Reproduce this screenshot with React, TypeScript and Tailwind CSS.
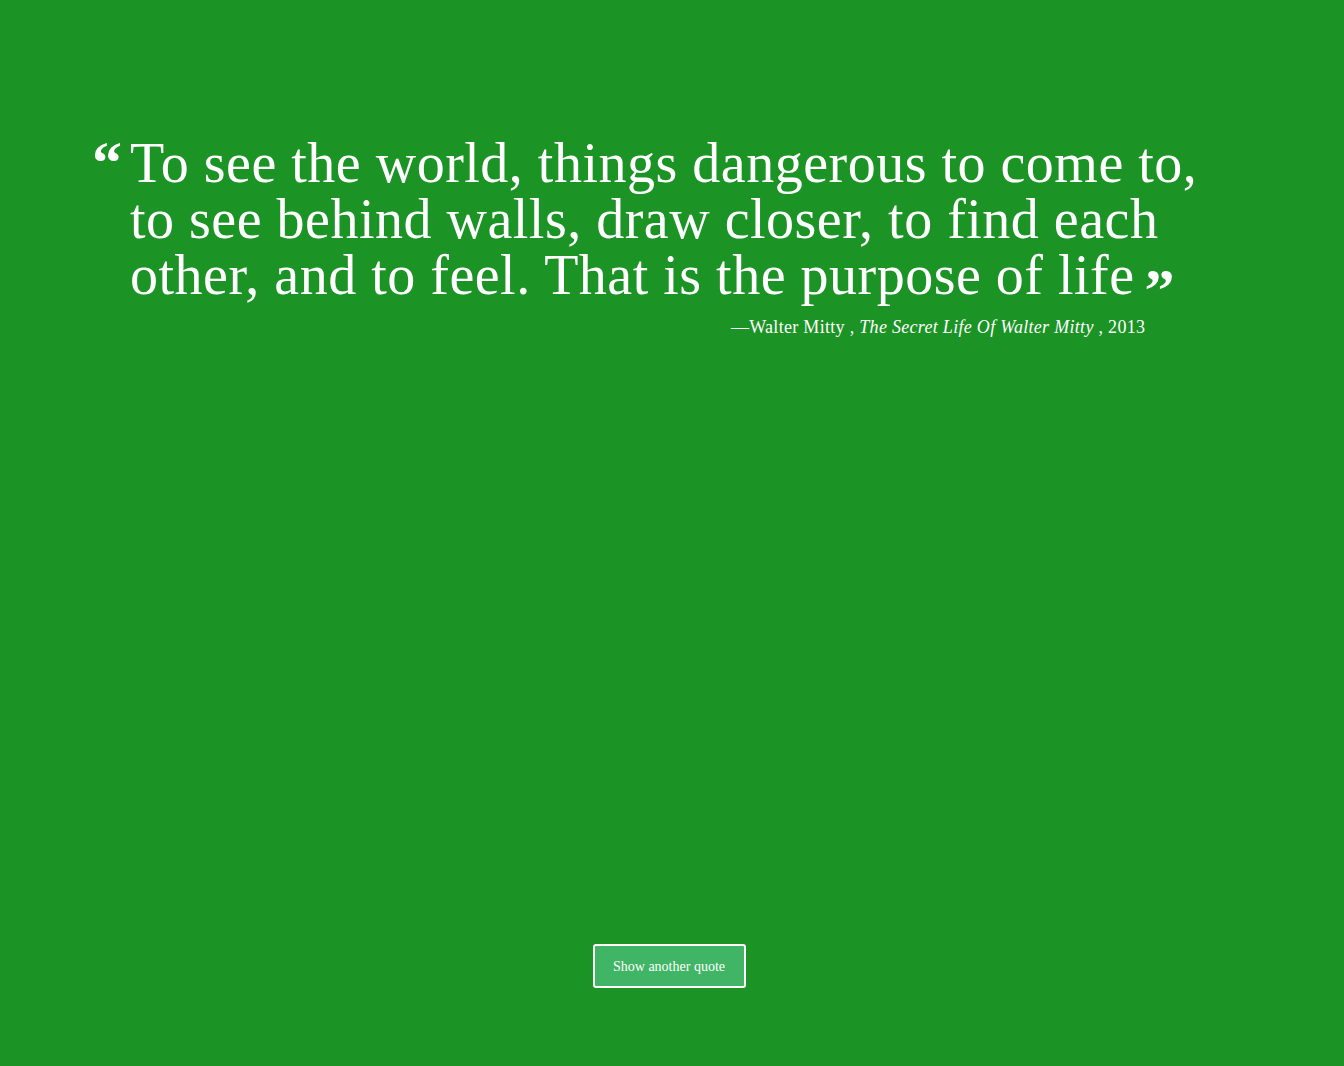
import React from 'react';

const serif = { fontFamily: '"Liberation Serif", "DejaVu Serif", serif' };

const App = () => {
  return (
    <div className="min-h-[1066px] w-full bg-[#1b9325] text-white flex flex-col" style={serif}>
      <div className="pt-[135px] pl-[92px] pr-[100px]">
        <div className="flex items-start">
          <span className="w-[38px] shrink-0 text-[60px] leading-[60px] font-bold h-[40px] -mt-[2px]">“</span>
          <div>
            <p className="text-[56px] leading-[56px] tracking-[0.5px]">
              To see the world, things dangerous to come to,
              <br />
              to see behind walls, draw closer, to find each
              <br />
              other, and to feel. That is the purpose of life
              <span className="inline-block ml-[10px] font-bold text-[60px] leading-[0] relative top-[16px]">”</span>
            </p>
            <div className="flex pr-[52px] justify-end mt-[13px] text-[18px] leading-[22px] tracking-[0.3px]">
              <span>—Walter Mitty , <i>The Secret Life Of Walter Mitty</i> , 2013</span>
            </div>
          </div>
        </div>
      </div>
      <div className="flex-1" />
      <div className="flex justify-center pb-[78px]">
        <button className="mr-[6px] h-[44px] w-[153px] rounded-[3px] border-2 border-white bg-[#40b565] text-[14px] text-white" style={serif}>
          Show another quote
        </button>
      </div>
    </div>
  );
};

export default App;
